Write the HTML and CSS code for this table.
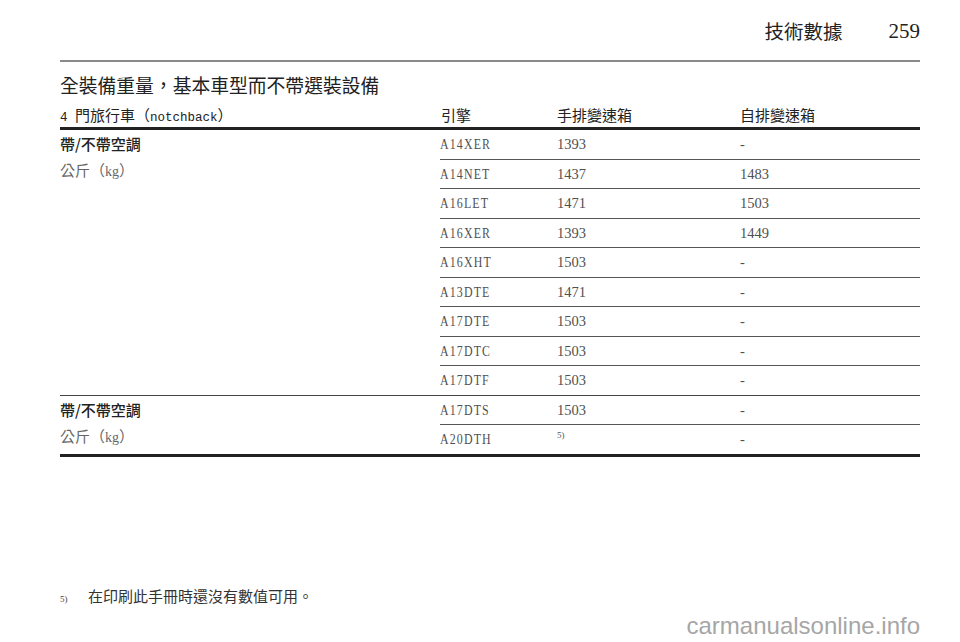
FILE: index.html
```html
<!DOCTYPE html>
<html lang="zh-Hant">
<head>
<meta charset="utf-8">
<title>技術數據 259</title>
<link rel="stylesheet" href="styles.css">
</head>
<body>
<div class="page">
  <header class="header">
    <span class="header-title">技術數據</span>
    <span class="header-page">259</span>
  </header>

  <h1 class="title">全裝備重量，基本車型而不帶選裝設備</h1>

  <div class="table">
    <div class="thead">
      <div class="th th-first"><span class="mono">4 </span>門旅行車（<span class="mono">notchback</span>）</div>
      <div class="th">引擎</div>
      <div class="th">手排變速箱</div>
      <div class="th">自排變速箱</div>
    </div>

    <div class="group">
      <div class="label">
        <div class="label-main">帶/不帶空調</div>
        <div class="label-unit">公斤（<span class="lat">kg</span>）</div>
      </div>
      <div class="rows">
        <div class="row"><span>A14XER</span><span>1393</span><span>-</span></div>
        <div class="row"><span>A14NET</span><span>1437</span><span>1483</span></div>
        <div class="row"><span>A16LET</span><span>1471</span><span>1503</span></div>
        <div class="row"><span>A16XER</span><span>1393</span><span>1449</span></div>
        <div class="row"><span>A16XHT</span><span>1503</span><span>-</span></div>
        <div class="row"><span>A13DTE</span><span>1471</span><span>-</span></div>
        <div class="row"><span>A17DTE</span><span>1503</span><span>-</span></div>
        <div class="row"><span>A17DTC</span><span>1503</span><span>-</span></div>
        <div class="row row-last"><span>A17DTF</span><span>1503</span><span>-</span></div>
      </div>
    </div>

    <div class="group group-end">
      <div class="label">
        <div class="label-main">帶/不帶空調</div>
        <div class="label-unit">公斤（<span class="lat">kg</span>）</div>
      </div>
      <div class="rows">
        <div class="row"><span>A17DTS</span><span>1503</span><span>-</span></div>
        <div class="row row-last"><span>A20DTH</span><span><sup class="fn">5)</sup></span><span>-</span></div>
      </div>
    </div>
  </div>

  <p class="footnote"><sup class="fn-mark">5)</sup><span>在印刷此手冊時還沒有數值可用。</span></p>
</div>
<div class="watermark">carmanualsonline.info</div>
</body>
</html>
```

FILE: styles.css
```css
html, body {
  margin: 0;
  padding: 0;
  background: #ffffff;
}

body {
  width: 960px;
  height: 642px;
  position: relative;
  overflow: hidden;
  font-family: "Liberation Serif", "Noto Sans CJK TC", serif;
  color: #222;
}

.page {
  padding: 0 40px 0 60px;
}

.header {
  display: flex;
  justify-content: flex-end;
  align-items: center;
  gap: 46px;
  height: 60px;
  border-bottom: 2px solid #8a8a8a;
}

.header-title {
  font-family: "Noto Sans CJK TC", sans-serif;
  font-size: 19.5px;
  line-height: 24px;
  color: #222;
  margin-top: 1px;
}

.header-page {
  font-family: "Liberation Serif", serif;
  font-size: 21px;
  line-height: 24px;
  color: #222;
  margin-top: 2px;
}

.title {
  margin: 11px 0 0 0;
  height: 24px;
  font-family: "Noto Sans CJK TC", sans-serif;
  font-weight: normal;
  font-size: 18.8px;
  line-height: 24px;
  color: #222;
}

.table {
  width: 860px;
}

.thead {
  display: grid;
  grid-template-columns: 381px 116px 183px 1fr;
  grid-template-rows: 20px;
  box-sizing: border-box;
  padding: 8px 0 2px 0;
  border-bottom: 3px solid #222;
  height: 33px;
}

.th {
  font-family: "Noto Sans CJK TC", sans-serif;
  font-size: 15px;
  line-height: 20px;
  height: 20px;
  color: #222;
  white-space: nowrap;
}

.mono {
  font-family: "Liberation Mono", monospace;
  font-size: 12.5px;
  white-space: pre;
}

.group {
  display: grid;
  grid-template-columns: 380px 1fr;
  border-bottom: 1px solid #444;
}

.group-end {
  border-bottom: 3px solid #222;
}

.label {
  padding-top: 1px;
}

.label-main {
  font-family: "Noto Sans CJK TC", sans-serif;
  font-size: 15px;
  line-height: 26px;
  color: #222;
  font-weight: 500;
}

.label-unit {
  font-family: "Noto Sans CJK TC", sans-serif;
  font-size: 15px;
  line-height: 26px;
  color: #666;
}

.lat {
  font-family: "Liberation Serif", serif;
  font-size: 14px;
}

.rows {
  display: flex;
  flex-direction: column;
}

.row {
  display: grid;
  grid-template-columns: 117px 183px 1fr;
  align-items: center;
  height: 29.5px;
  box-sizing: border-box;
  border-bottom: 1px solid #555;
  font-family: "Liberation Serif", serif;
  font-size: 14.5px;
  color: #505050;
  padding-top: 1px;
}

.row > span:first-child {
  font-size: 14.5px;
  letter-spacing: 1.4px;
  transform: scaleX(0.82);
  transform-origin: left center;
  white-space: nowrap;
}

.row-last {
  border-bottom: none;
  height: 28.5px;
}

.fn {
  font-size: 9px;
  vertical-align: 6px;
  line-height: 0;
  color: #555;
}

.footnote {
  margin: 129px 0 0 0;
  display: flex;
  align-items: baseline;
  font-family: "Noto Sans CJK TC", sans-serif;
  font-size: 15px;
  line-height: 20px;
  color: #333;
}

.fn-mark {
  font-family: "Liberation Serif", serif;
  font-size: 9px;
  vertical-align: 6px;
  line-height: 0;
  width: 28px;
  color: #444;
}

.watermark {
  position: absolute;
  right: 40px;
  top: 612px;
  font-family: "Liberation Sans", sans-serif;
  font-size: 24px;
  line-height: 28px;
  color: #a6a6a6;
}
```
